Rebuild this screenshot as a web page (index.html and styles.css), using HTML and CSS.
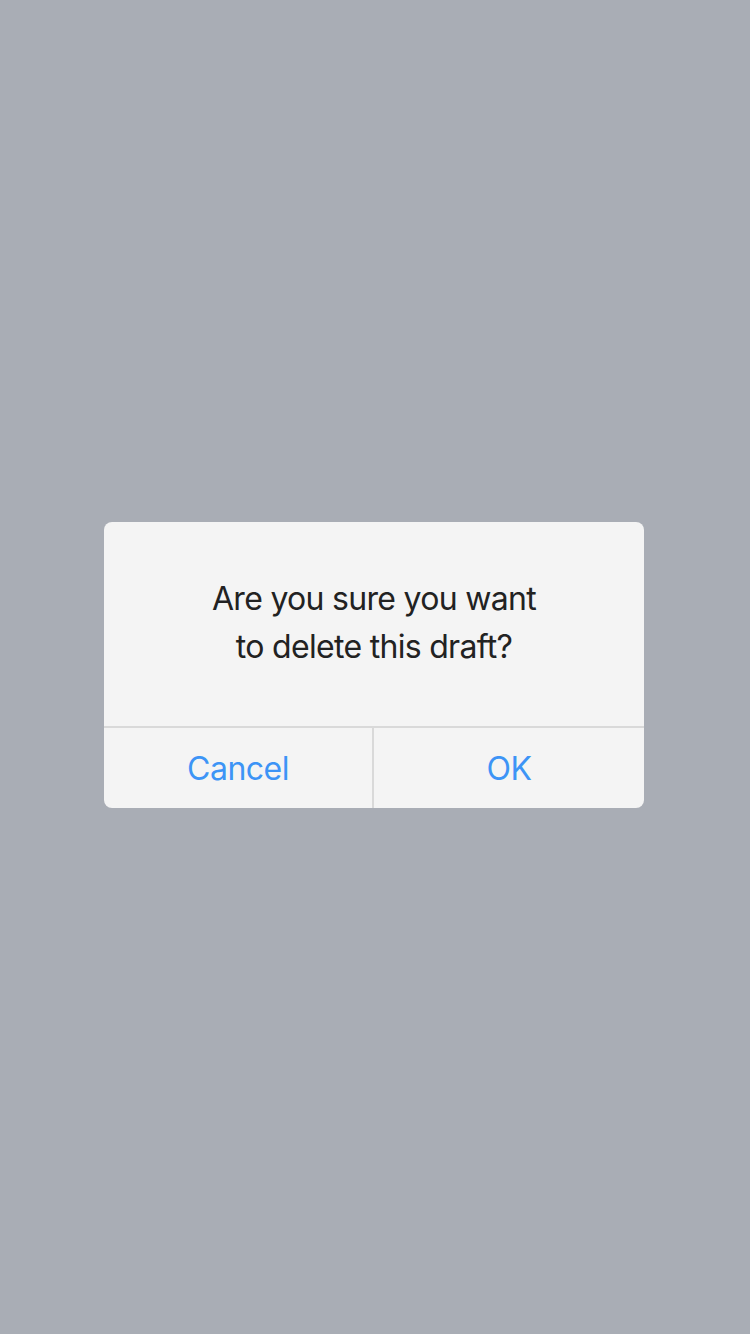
FILE: index.html
```html
<!DOCTYPE html>
<html lang="en">
<head>
<meta charset="utf-8">
<title>Delete draft</title>
<link rel="stylesheet" href="styles.css">
</head>
<body>
<div class="screen">
  <div class="dialog" role="alertdialog">
    <div class="message">Are you sure you want<br>to delete this draft?</div>
    <div class="actions">
      <button class="action">Cancel</button>
      <button class="action">OK</button>
    </div>
  </div>
</div>
</body>
</html>
```

FILE: styles.css
```css
html, body {
  margin: 0;
  padding: 0;
  width: 750px;
  height: 1334px;
  background: #a9adb5;
  font-family: Inter, "Noto Sans", "Liberation Sans", sans-serif;
}

.screen {
  width: 750px;
  height: 1334px;
  display: flex;
  align-items: center;
  justify-content: center;
  padding-bottom: 4px;
  padding-right: 2px;
  box-sizing: border-box;
}

.dialog {
  width: 540px;
  background: #f4f4f4;
  border-radius: 8px;
  overflow: hidden;
  display: flex;
  flex-direction: column;
}

.message {
  padding: 53px 20px 55px;
  text-align: center;
  font-size: 32px;
  line-height: 48px;
  letter-spacing: -0.7px;
  color: #222222;
}

.actions {
  display: grid;
  grid-template-columns: 268px 1fr;
  border-top: 2px solid #d9d9d9;
}

.action {
  height: 80px;
  border: none;
  background: transparent;
  font-family: inherit;
  font-size: 32px;
  letter-spacing: -0.5px;
  color: #3d94f6;
  padding: 0;
  margin: 0;
}

.action + .action {
  border-left: 2px solid #d9d9d9;
}
```
